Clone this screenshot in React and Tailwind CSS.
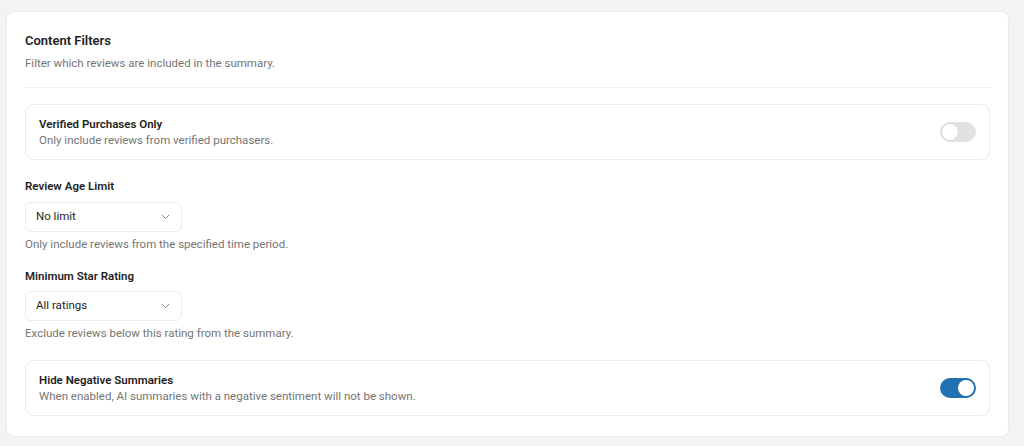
import React from "react";

function Toggle({ on }) {
  return (
    <div
      className={
        "relative w-[36px] h-[20px] rounded-full shrink-0 " +
        (on ? "bg-[#2271b1]" : "bg-[#e2e2e2]")
      }
    >
      <div
        className={
          "absolute top-[2px] w-[16px] h-[16px] rounded-full bg-white " +
          (on ? "left-[18px]" : "left-[2px] shadow-[0_0_0_1px_#d8d8d8]")
        }
      />
    </div>
  );
}

function ToggleRow({ title, desc, on }) {
  return (
    <div className="flex items-center justify-between border border-[#ececec] rounded-[8px] h-[56px] pl-[13px] pr-[13px]">
      <div className="flex flex-col">
        <div className="text-[11.5px] leading-[16px] font-semibold text-[#1e1e1e]">{title}</div>
        <div className="text-[11.5px] leading-[16px] text-[#757575]">{desc}</div>
      </div>
      <Toggle on={on} />
    </div>
  );
}

function Select({ value }) {
  return (
    <div className="flex items-center justify-between w-[157px] h-[30px] border border-[#ececec] rounded-[6px] pl-[10px] pr-[11px]">
      <span className="text-[11.5px] text-[#1e1e1e]">{value}</span>
      <svg width="9" height="6" viewBox="0 0 9 6" fill="none">
        <path d="M1 1l3.5 3.5L8 1" stroke="#8a8a8a" strokeWidth="1" />
      </svg>
    </div>
  );
}

export default function App() {
  return (
    <div
      className="w-[1024px] h-[446px] bg-[#f3f3f3] pt-[11px] pl-[6px] pr-[15px]"
      style={{ fontFamily: "Roboto, 'Liberation Sans', sans-serif" }}
    >
      <div className="bg-white border border-[#ebebeb] rounded-[8px] px-[18px] pt-[19px] pb-[20px]">
        <div className="pb-[16px] border-b border-[#f0f0f0]">
          <div className="text-[13px] leading-[20px] font-semibold text-[#1e1e1e]">Content Filters</div>
          <div className="mt-[4px] text-[11.5px] leading-[16px] text-[#757575]">
            Filter which reviews are included in the summary.
          </div>
        </div>
        <div className="mt-[16px]">
          <ToggleRow
            title="Verified Purchases Only"
            desc="Only include reviews from verified purchasers."
            on={false}
          />
        </div>
        <div className="mt-[16px] text-[11.5px] leading-[20px] font-semibold text-[#1e1e1e]">Review Age Limit</div>
        <div className="mt-[6px]">
          <Select value="No limit" />
        </div>
        <div className="mt-[4px] text-[11.5px] leading-[16px] text-[#757575]">
          Only include reviews from the specified time period.
        </div>
        <div className="mt-[14px] text-[11.5px] leading-[20px] font-semibold text-[#1e1e1e]">Minimum Star Rating</div>
        <div className="mt-[5px]">
          <Select value="All ratings" />
        </div>
        <div className="mt-[4px] text-[11.5px] leading-[16px] text-[#757575]">
          Exclude reviews below this rating from the summary.
        </div>
        <div className="mt-[19px]">
          <ToggleRow
            title="Hide Negative Summaries"
            desc="When enabled, AI summaries with a negative sentiment will not be shown."
            on={true}
          />
        </div>
      </div>
    </div>
  );
}
